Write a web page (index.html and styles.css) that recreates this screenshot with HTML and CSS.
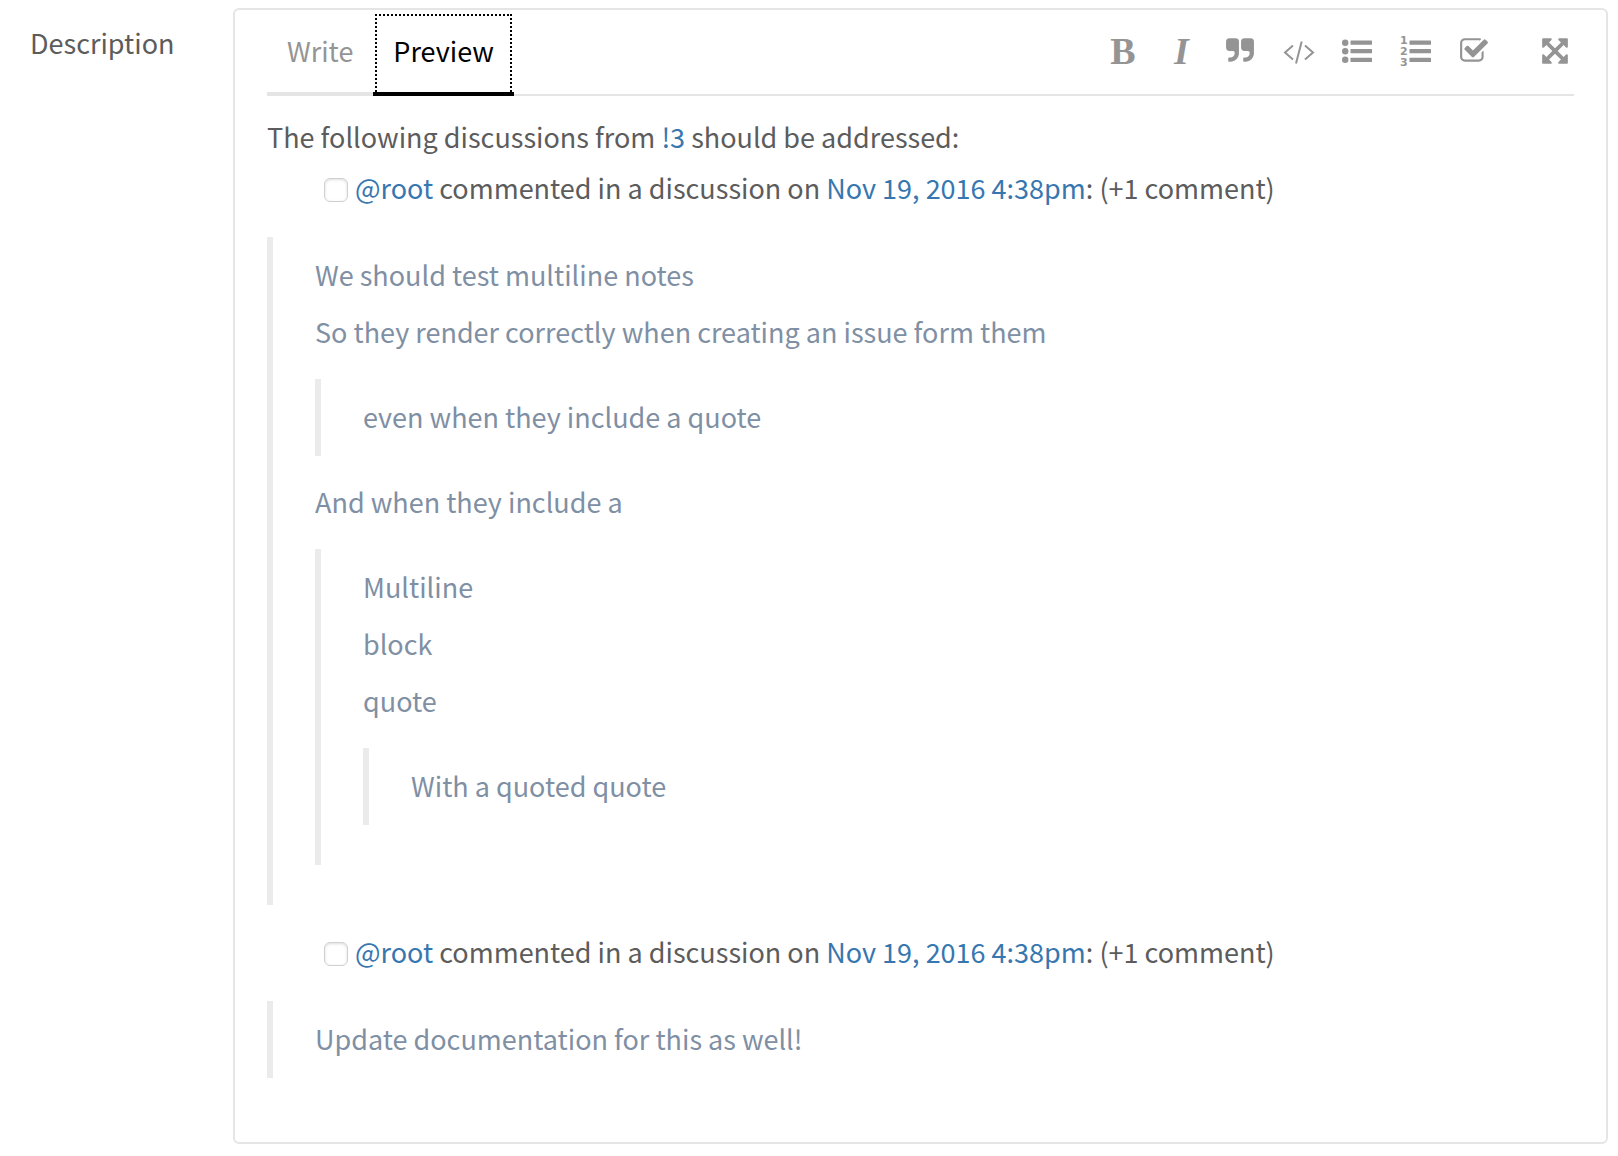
FILE: index.html
```html
<!DOCTYPE html>
<html lang="en">
<head>
<meta charset="utf-8">
<title>Description</title>
<link rel="stylesheet" href="styles.css">
</head>
<body>
<main class="form-row">
  <div class="form-label" id="description-label">Description</div>
  <section class="editor" aria-labelledby="description-label">
    <header class="editor-header">
      <div class="tabs" role="tablist">
        <button class="tab" type="button" role="tab" aria-selected="false">Write</button>
        <button class="tab tab-active" type="button" role="tab" aria-selected="true">Preview</button>
      </div>
      <div class="toolbar">
        <div class="tool-group">
          <button class="tool tool-bold" type="button" aria-label="Bold text">B</button>
          <button class="tool tool-italic" type="button" aria-label="Italic text">I</button>
          <button class="tool" type="button" aria-label="Insert a quote">
            <svg class="icon" viewBox="0 0 1792 1792"><path d="M832 320v704q0 104-40.500 198.500t-109.500 163.500-163.500 109.500-198.500 40.500h-64q-26 0-45-19t-19-45v-128q0-26 19-45t45-19h64q106 0 181-75t75-181v-32q0-40-28-68t-68-28h-224q-80 0-136-56t-56-136v-384q0-80 56-136t136-56h384q80 0 136 56t56 136zm896 0v704q0 104-40.500 198.500t-109.500 163.500-163.500 109.500-198.500 40.500h-64q-26 0-45-19t-19-45v-128q0-26 19-45t45-19h64q106 0 181-75t75-181v-32q0-40-28-68t-68-28h-224q-80 0-136-56t-56-136v-384q0-80 56-136t136-56h384q80 0 136 56t56 136z"/></svg>
          </button>
          <button class="tool" type="button" aria-label="Insert code">
            <svg class="icon icon-line" viewBox="0 0 30 30"><path d="M9 9.500L1 16.500L9 23.500M21 9.500L29 16.500L21 23.500M17.700 5.500L12 27.500"/></svg>
          </button>
          <button class="tool" type="button" aria-label="Add a bullet list">
            <svg class="icon" viewBox="0 0 30 30"><circle cx="3.200" cy="6.700" r="3.200"/><circle cx="3.200" cy="15.200" r="3.200"/><circle cx="3.200" cy="23.800" r="3.200"/><rect x="8.500" y="4.500" width="21.500" height="4.300" rx=".6"/><rect x="8.500" y="13" width="21.500" height="4.300" rx=".6"/><rect x="8.500" y="21.700" width="21.500" height="4.300" rx=".6"/></svg>
          </button>
          <button class="tool" type="button" aria-label="Add a numbered list">
            <svg class="icon" viewBox="0 0 30 30"><text class="digit" x="-1" y="8">1</text><text class="digit" x="-1" y="19">2</text><text class="digit" x="-1" y="30">3</text><rect x="8.500" y="4.500" width="21.500" height="4.300" rx=".6"/><rect x="8.500" y="13" width="21.500" height="4.300" rx=".6"/><rect x="8.500" y="21.700" width="21.500" height="4.300" rx=".6"/></svg>
          </button>
          <button class="tool" type="button" aria-label="Add a task list">
            <svg class="icon" viewBox="0 0 1792 1792"><path d="M1472 930v318q0 119-84.500 203.500t-203.500 84.500h-832q-119 0-203.500-84.500t-84.500-203.500v-832q0-119 84.500-203.500t203.500-84.500h832q63 0 117 25 15 7 18 23 3 17-9 29l-49 49q-10 10-23 10-3 0-9-2-23-6-45-6h-832q-66 0-113 47t-47 113v832q0 66 47 113t113 47h832q66 0 113-47t47-113v-254q0-13 9-22l64-64q10-10 23-10 6 0 12 3 20 8 20 29zm231-489l-814 814q-24 24-57 24t-57-24l-430-430q-24-24-24-57t24-57l110-110q24-24 57-24t57 24l263 263 647-647q24-24 57-24t57 24l110 110q24 24 24 57t-24 57z"/></svg>
          </button>
        </div>
        <button class="tool" type="button" aria-label="Go full screen">
          <svg class="icon" viewBox="0 0 1792 1792"><path d="M1411 541l-355 355 355 355 144-144q29-31 70-14 39 17 39 59v448q0 26-19 45t-45 19h-448q-42 0-59-40-17-39 14-69l144-144-355-355-355 355 144 144q31 30 14 69-17 40-59 40h-448q-26 0-45-19t-19-45v-448q0-42 40-59 39-17 69 14l144 144 355-355-355-355-144 144q-19 19-45 19-12 0-24-5-40-17-40-59v-448q0-26 19-45t45-19h448q42 0 59 40 17 39-14 69l-144 144 355 355 355-355-144-144q-31-30-14-69 17-40 59-40h448q26 0 45 19t19 45v448q0 42-39 59-13 5-25 5-26 0-45-19z"/></svg>
        </button>
      </div>
    </header>
    <div class="preview">
      <p>The following discussions from <a href="#">!3</a> should be addressed:</p>
      <ul class="task-list">
        <li><label class="task"><input class="task-check" type="checkbox"><span><a href="#">@root</a> commented in a discussion on <a href="#">Nov 19, 2016 4:38pm</a>: (+1 comment)</span></label></li>
      </ul>
      <blockquote>
        <p>We should test multiline notes</p>
        <p>So they render correctly when creating an issue form them</p>
        <blockquote>
          <p>even when they include a quote</p>
        </blockquote>
        <p>And when they include a</p>
        <blockquote>
          <p>Multiline</p>
          <p>block</p>
          <p>quote</p>
          <blockquote>
            <p>With a quoted quote</p>
          </blockquote>
        </blockquote>
      </blockquote>
      <ul class="task-list">
        <li><label class="task"><input class="task-check" type="checkbox"><span><a href="#">@root</a> commented in a discussion on <a href="#">Nov 19, 2016 4:38pm</a>: (+1 comment)</span></label></li>
      </ul>
      <blockquote>
        <p>Update documentation for this as well!</p>
      </blockquote>
    </div>
  </section>
</main>
</body>
</html>
```
FILE: styles.css
```css
* {
  box-sizing: border-box;
}

body {
  margin: 0;
  background: #fff;
  color: #5c5c5c;
  font-family: "Noto Sans CJK SC", "Noto Sans", sans-serif;
  font-size: 27px;
  line-height: 45px;
}

a {
  color: #3777b0;
  text-decoration: none;
}

button {
  padding: 0;
  border: 0;
  background: none;
  color: inherit;
  font: inherit;
}

.form-row {
  display: grid;
  grid-template-columns: 203px 1fr;
  padding: 8px 10px 12px 30px;
}

.form-label {
  padding-top: 12px;
}

.editor {
  padding: 0 32px 64px;
  border: 2px solid #e5e5e5;
  border-radius: 6px;
}

.editor-header {
  display: flex;
  justify-content: space-between;
  height: 86px;
  box-shadow: inset 0 -2px #e5e5e5;
}

.tabs {
  display: flex;
}

.tab {
  padding: 0 20px 2px;
  border-bottom: 4px solid #e5e5e5;
  color: #959494;
}

/* The selected tab carries a dotted focus frame on three sides. */
.tab-active {
  margin-top: 4px;
  padding-bottom: 6px;
  border-bottom-color: #000;
  color: #000;
  background:
    repeating-linear-gradient(90deg, #000 0 2px, transparent 2px 4px) 2px 0 / calc(100% - 4px) 2px no-repeat,
    repeating-linear-gradient(#000 0 2px, transparent 2px 4px) 2px 0 / 2px 100% no-repeat,
    repeating-linear-gradient(#000 0 2px, transparent 2px 4px) calc(100% - 2px) 0 / 2px 100% no-repeat;
}

.toolbar {
  display: flex;
  align-items: center;
  gap: 51px;
  padding: 0 4px 4px 0;
  color: #959494;
}

.tool-group {
  display: flex;
  justify-content: space-between;
  width: 381px;
}

.tool {
  display: flex;
  align-items: center;
  justify-content: center;
  width: 30px;
  height: 30px;
}

.tool-bold,
.tool-italic {
  font-family: "Liberation Serif", serif;
  font-size: 38px;
  font-weight: 700;
  line-height: 30px;
}

.tool-italic {
  font-style: italic;
}

.icon {
  display: block;
  width: 30px;
  height: 30px;
  fill: currentColor;
  overflow: visible;
}

.icon-line {
  fill: none;
  stroke: currentColor;
  stroke-width: 2;
}

.digit {
  font: 700 11px "DejaVu Sans", sans-serif;
}

.preview {
  padding-top: 18px;
}

.preview p {
  margin: 0;
}

.preview p + p {
  margin-top: 12px;
}

.task-list {
  margin: 6px 0 0;
  padding: 0 0 0 57px;
  list-style: none;
}

.task {
  display: flex;
  gap: 7px;
  min-height: 48px;
}

.task-check {
  appearance: none;
  flex: none;
  width: 24px;
  height: 24px;
  margin: 13px 0 0;
  border: 1px solid #d0d0d0;
  border-radius: 6px;
  background: #fff;
  box-shadow: inset 0 1px 3px #ddd;
}

blockquote {
  margin: 24px 0;
  padding: 15px 0 17px 42px;
  border-left: 6px solid #ebebeb;
  color: #7f8fa4;
}

blockquote > blockquote {
  margin: 25px 0 23px;
}

.preview > blockquote:last-child {
  margin-bottom: 0;
}
```
